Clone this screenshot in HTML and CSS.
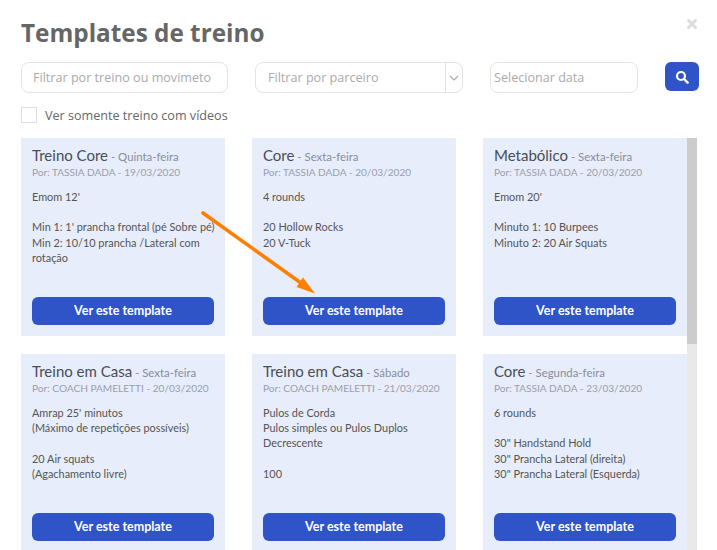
FILE: index.html
```html
<!DOCTYPE html>
<html lang="en">
<head>
    <meta charset="UTF-8">
    <title>Templates de treino</title>
    <link rel="stylesheet" href="styles.css">
</head>
<body>
    <div class="modal">
        <svg class="close" viewBox="0 0 12 12" width="12" height="12"><path d="M2.5 2.5l7 7M9.5 2.5l-7 7" stroke="#dcdcdc" stroke-width="3" stroke-linecap="round"/></svg>
        <h1>Templates de treino</h1>

        <div class="filters">
            <input class="field field-text" type="text" placeholder="Filtrar por treino ou movimeto">
            <div class="select">
                <span class="select-label">Filtrar por parceiro</span>
                <span class="select-arrow">
                    <svg viewBox="0 0 10 6" width="10" height="6"><path d="M1 1l4 4 4-4" fill="none" stroke="#aaa" stroke-width="1.2"/></svg>
                </span>
            </div>
            <input class="field field-date" type="text" placeholder="Selecionar data">
            <button class="search">
                <svg viewBox="0 0 14 14" width="14" height="14"><circle cx="6" cy="6" r="4" fill="none" stroke="#fff" stroke-width="2.2"/><path d="M9 9l3.6 3.6" stroke="#fff" stroke-width="2.4" stroke-linecap="round"/></svg>
            </button>
        </div>

        <label class="only-videos"><span class="checkbox"></span>Ver somente treino com vídeos</label>

        <div class="list">
            <div class="cards">
                <div class="card">
                    <div class="card-title"><b>Treino Core</b> - Quinta-feira</div>
                    <div class="card-author">Por: TASSIA DADA - 19/03/2020</div>
                    <div class="card-body">Emom 12'<br><br>Min 1: 1' prancha frontal (pé Sobre pé)<br>Min 2: 10/10 prancha /Lateral com rotação</div>
                    <button class="use">Ver este template</button>
                </div>
                <div class="card">
                    <div class="card-title"><b>Core</b> - Sexta-feira</div>
                    <div class="card-author">Por: TASSIA DADA - 20/03/2020</div>
                    <div class="card-body">4 rounds<br><br>20 Hollow Rocks<br>20 V-Tuck</div>
                    <button class="use">Ver este template</button>
                </div>
                <div class="card">
                    <div class="card-title"><b>Metabólico</b> - Sexta-feira</div>
                    <div class="card-author">Por: TASSIA DADA - 20/03/2020</div>
                    <div class="card-body">Emom 20'<br><br>Minuto 1: 10 Burpees<br>Minuto 2: 20 Air Squats</div>
                    <button class="use">Ver este template</button>
                </div>
                <div class="card">
                    <div class="card-title"><b>Treino em Casa</b> - Sexta-feira</div>
                    <div class="card-author">Por: COACH PAMELETTI - 20/03/2020</div>
                    <div class="card-body">Amrap 25' minutos<br>(Máximo de repetições possíveis)<br><br>20 Air squats<br>(Agachamento livre)</div>
                    <button class="use">Ver este template</button>
                </div>
                <div class="card">
                    <div class="card-title"><b>Treino em Casa</b> - Sábado</div>
                    <div class="card-author">Por: COACH PAMELETTI - 21/03/2020</div>
                    <div class="card-body">Pulos de Corda<br>Pulos simples ou Pulos Duplos Decrescente<br><br>100</div>
                    <button class="use">Ver este template</button>
                </div>
                <div class="card">
                    <div class="card-title"><b>Core</b> - Segunda-feira</div>
                    <div class="card-author">Por: TASSIA DADA - 23/03/2020</div>
                    <div class="card-body">6 rounds<br><br>30" Handstand Hold<br>30" Prancha Lateral (direita)<br>30" Prancha Lateral (Esquerda)</div>
                    <button class="use">Ver este template</button>
                </div>
            </div>
            <div class="scrollbar"><div class="scrollbar-thumb"></div></div>
        </div>

        <svg class="arrow" viewBox="0 0 120 90" width="120" height="90"><path d="M3 3L101 73" stroke="#ff7f00" stroke-width="3.6" stroke-linecap="round"/><path d="M115 83.5L96.5 77L103 67.5Z" fill="#ff7f00"/></svg>
    </div>
</body>
</html>
```

FILE: styles.css
```css
* {
    box-sizing: border-box;
}

html, body {
    margin: 0;
    height: 550px;
    overflow: hidden;
    background: #fff;
}

body {
    font-family: "Lato", sans-serif;
}

.modal {
    position: relative;
    height: 550px;
    padding: 18px 18px 0 21px;
    overflow: hidden;
}

.close {
    position: absolute;
    top: 18px;
    right: 19px;
}

h1 {
    margin: 0;
    font-family: "Open Sans", sans-serif;
    font-size: 24.3px;
    line-height: 29px;
    font-weight: 700;
    color: #666;
}

.filters {
    display: flex;
    align-items: flex-start;
    margin-top: 15px;
}

.field, .select {
    height: 31px;
    border: 1px solid #e3e3e3;
    border-radius: 8px;
    background: #fff;
    font-family: "Open Sans", sans-serif;
    font-size: 12.6px;
    color: #aaa;
}

.field::placeholder {
    color: #aaa;
    opacity: 1;
}

.field-text {
    width: 207px;
    padding: 0 11px;
}

.select {
    display: flex;
    width: 208px;
    margin-left: 27px;
}

.select-label {
    flex: 1;
    padding: 0 12px;
    line-height: 29px;
}

.select-arrow {
    display: flex;
    align-items: center;
    justify-content: center;
    width: 17px;
    border-left: 1px solid #e3e3e3;
}

.field-date {
    width: 148px;
    margin-left: 27px;
    padding: 0 3px;
}

.search {
    display: flex;
    align-items: center;
    justify-content: center;
    width: 34px;
    height: 29px;
    margin-left: 27px;
    padding: 0;
    border: none;
    border-radius: 6px;
    background: #2f54c8;
}

.only-videos {
    display: flex;
    align-items: center;
    margin-top: 14px;
    height: 16px;
    font-family: "Open Sans", sans-serif;
    font-size: 12.6px;
    color: #666;
}

.checkbox {
    width: 16px;
    height: 16px;
    margin-right: 8px;
    border: 1px solid #ddd;
}

.list {
    display: flex;
    margin-top: 15px;
    height: 412px;
}

.cards {
    display: grid;
    grid-template-columns: repeat(3, 204px);
    grid-auto-rows: 198px;
    gap: 18px 27px;
}

.card {
    display: flex;
    flex-direction: column;
    padding: 8px 11px 11px;
    background: #e7edfa;
    font-size: 10.9px;
    line-height: 15.4px;
    color: #555;
}

.card-title {
    font-size: 11.4px;
    line-height: 19px;
    color: #888e9c;
}

.card-title b {
    font-size: 15px;
    font-weight: 400;
    color: #4a4d55;
}

.card-author {
    font-size: 10.1px;
    color: #9a9fab;
    line-height: 13px;
}

.card-body {
    flex: 1;
    margin: 9.5px -4px 0 0;
}

.use {
    height: 28.5px;
    padding: 0;
    border: none;
    border-radius: 6px;
    background: #2f54c8;
    font-family: "Lato", sans-serif;
    font-size: 12.5px;
    font-weight: 700;
    color: #fff;
}

.scrollbar {
    width: 10px;
    background: #e9e9e9;
}

.scrollbar-thumb {
    height: 206px;
    background: #ccc;
}

.arrow {
    position: absolute;
    left: 200px;
    top: 210px;
}
```
